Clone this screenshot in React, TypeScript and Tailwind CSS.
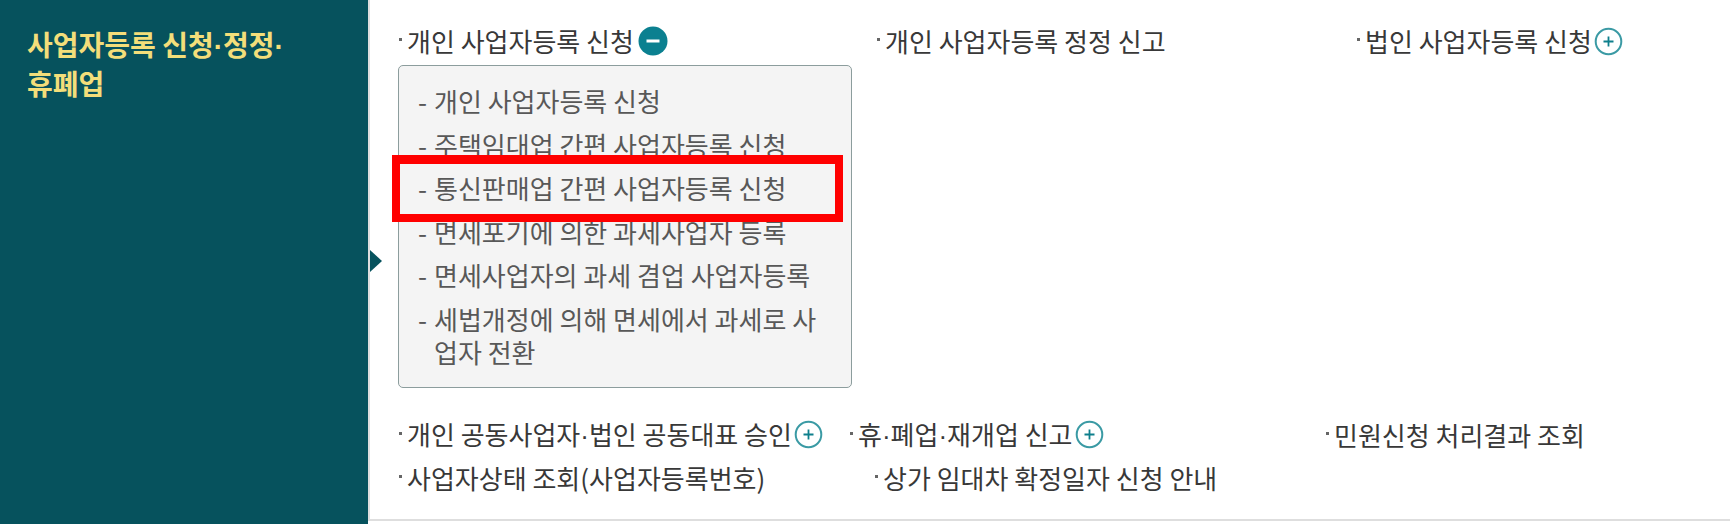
import React from "react";

const TEAL = "#06525d";

// narrow middle dot (the CJK font draws · full-width)
const Dot = () => <span style={{ fontFamily: '"Liberation Sans", sans-serif' }}>·</span>;

const Bullet = () => (
  <span className="ml-px mr-[5px] mb-[3px] inline-block h-[3px] w-[3px] shrink-0 bg-[#666]" />
);

const PlusIcon = () => (
  <svg width="29" height="29" viewBox="0 0 29 29" className="ml-[2px] shrink-0">
    <circle cx="14.5" cy="14.5" r="12.8" fill="#fff" stroke="#3a9aa4" strokeWidth="2" />
    <path d="M14.5 9.5v10M9.5 14.5h10" stroke="#0e7f8c" strokeWidth="1.8" />
  </svg>
);

const MinusIcon = () => (
  <svg width="30" height="30" viewBox="0 0 30 30" className="ml-[4px] shrink-0">
    <circle cx="15" cy="15" r="14.5" fill="#0b8090" />
    <rect x="8.5" y="13.5" width="13" height="3" fill="#fff" />
  </svg>
);

const Item = ({
  label,
  icon,
  width,
}: {
  label: React.ReactNode;
  icon?: "plus" | "minus";
  width?: string;
}) => (
  <div className={`flex h-[32px] items-center shrink-0 ${width ?? ""}`}>
    <Bullet />
    <span className="whitespace-nowrap">{label}</span>
    {icon === "plus" && <PlusIcon />}
    {icon === "minus" && <MinusIcon />}
  </div>
);

const subItems: React.ReactNode[] = [
  "개인 사업자등록 신청",
  "주택임대업 간편 사업자등록 신청",
  "통신판매업 간편 사업자등록 신청",
  "면세포기에 의한 과세사업자 등록",
  "면세사업자의 과세 겸업 사업자등록",
  <>
    세법개정에 의해 면세에서 과세로 사<br />
    업자 전환
  </>,
];

export default function App() {
  return (
    <div
      className="flex h-[524px] w-[1730px] overflow-hidden bg-white"
      style={{ fontFamily: '"Noto Sans CJK KR", "Noto Sans", sans-serif' }}
    >
      <aside className="h-full w-[368px] shrink-0 bg-[#06525d] pl-[27px] pt-[26px]">
        <h2 className="text-[28px] font-bold leading-[36px] text-[#f3de7a]">
          사업자등록 신청<Dot />정정<Dot />
          <br />
          휴폐업
        </h2>
      </aside>

      <div className="relative h-[521px] flex-1 border-b-2 border-l-2 border-[#dedede] pl-[28px] pt-[25px] text-[26px] leading-[32px] text-[#383838]">
        <span
          className="absolute left-0 top-[250px] h-0 w-0 border-y-[11px] border-l-[12px] border-y-transparent"
          style={{ borderLeftColor: TEAL }}
        />

        <div className="flex items-start">
          <div className="w-[478px] shrink-0">
            <Item label="개인 사업자등록 신청" icon="minus" />
            <div className="relative mt-[8px] w-[454px] rounded-[5px] border border-[#8c9d9d] bg-[#f4f4f4] pb-[19px] pl-[19px] pt-[18px] text-[#585858]">
              <ul className="flex flex-col gap-[10.5px] leading-[33px]">
                {subItems.map((s, i) => (
                  <li key={i} className="flex">
                    <span className="w-[16px] shrink-0">-</span>
                    <span className="whitespace-nowrap">{s}</span>
                  </li>
                ))}
              </ul>
              <div className="absolute left-[-7px] top-[89px] h-[67px] w-[451px] border-[8px] border-t-[9px] border-[#ff0000]" />
            </div>
          </div>
          <Item label="개인 사업자등록 정정 신고" width="w-[480px]" />
          <Item label="법인 사업자등록 신청" icon="plus" />
        </div>

        <div className="mt-[31px] flex items-start">
          <Item
            label={<>개인 공동사업자<Dot />법인 공동대표 승인</>}
            icon="plus"
            width="w-[451px]"
          />
          <Item label={<>휴<Dot />폐업<Dot />재개업 신고</>} icon="plus" width="w-[476px]" />
          <Item label="민원신청 처리결과 조회" />
        </div>

        <div className="mt-[11px] flex items-start">
          <Item label="사업자상태 조회(사업자등록번호)" width="w-[476px]" />
          <Item label="상가 임대차 확정일자 신청 안내" />
        </div>
      </div>
    </div>
  );
}
